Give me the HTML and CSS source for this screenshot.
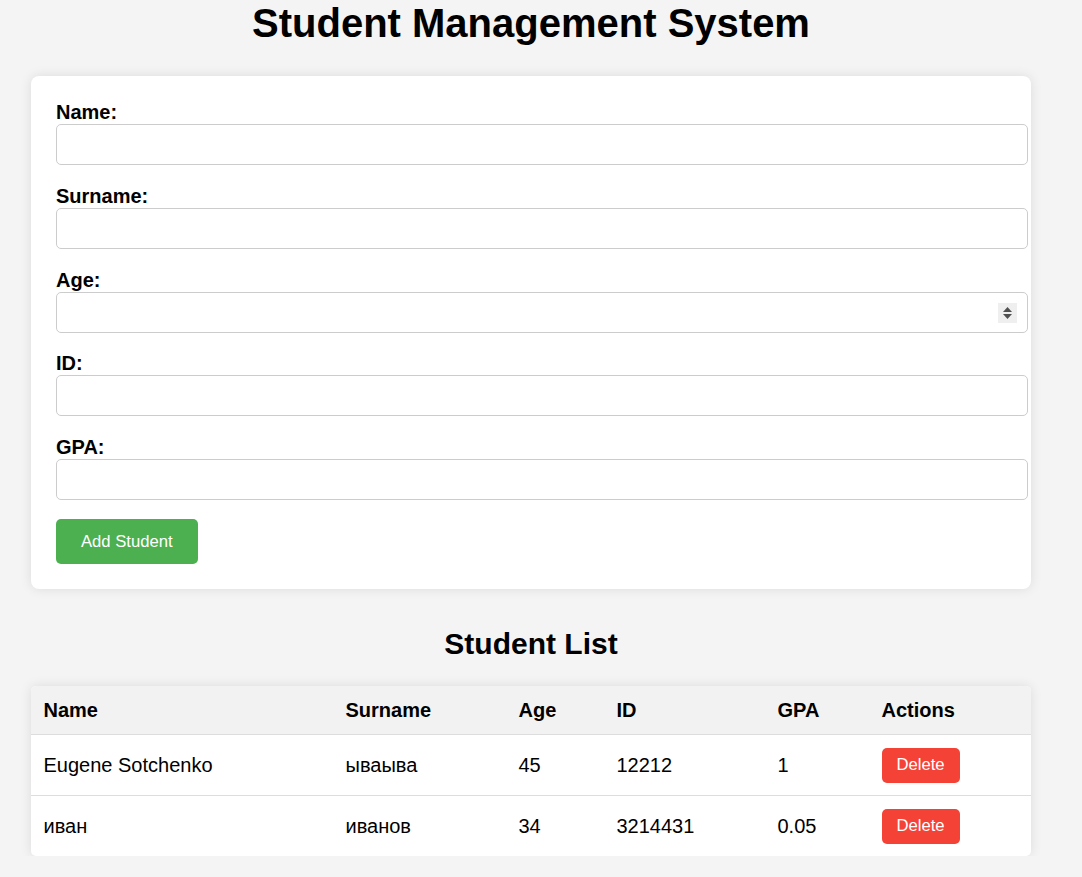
FILE: index.html
```html
<!DOCTYPE html>
<html lang="en">
<head>
<meta charset="utf-8">
<title>Student Management System</title>
<link rel="stylesheet" href="styles.css">
</head>
<body>
<div class="container">
  <h1 class="title">Student Management System</h1>
  <form class="card">
    <label class="field-label" for="name">Name:</label>
    <input class="field" id="name" type="text">
    <label class="field-label" for="surname">Surname:</label>
    <input class="field" id="surname" type="text">
    <label class="field-label" for="age">Age:</label>
    <div class="number-wrap">
      <input class="field field-number" id="age" type="number">
      <span class="spinner" aria-hidden="true">
        <svg width="11" height="14" viewBox="0 0 11 14"><path d="M5.5 1 L10 6 L1 6 Z" fill="#505050"/><path d="M1 8 L10 8 L5.5 13 Z" fill="#505050"/></svg>
      </span>
    </div>
    <label class="field-label" for="sid">ID:</label>
    <input class="field" id="sid" type="text">
    <label class="field-label" for="gpa">GPA:</label>
    <input class="field field-last" id="gpa" type="text">
    <button class="btn-add" type="button">Add Student</button>
  </form>
  <h2 class="subtitle">Student List</h2>
  <table class="students">
    <thead>
      <tr>
        <th class="c-name">Name</th>
        <th class="c-surname">Surname</th>
        <th class="c-age">Age</th>
        <th class="c-id">ID</th>
        <th class="c-gpa">GPA</th>
        <th class="c-actions">Actions</th>
      </tr>
    </thead>
    <tbody>
      <tr>
        <td>Eugene Sotchenko</td>
        <td>ываыва</td>
        <td>45</td>
        <td>12212</td>
        <td>1</td>
        <td><button class="btn-delete" type="button">Delete</button></td>
      </tr>
      <tr>
        <td>иван</td>
        <td>иванов</td>
        <td>34</td>
        <td>3214431</td>
        <td>0.05</td>
        <td><button class="btn-delete" type="button">Delete</button></td>
      </tr>
    </tbody>
  </table>
</div>
</body>
</html>
```

FILE: styles.css
```css
html, body {
  margin: 0;
  padding: 0;
}
body {
  background: #f4f4f4;
  font-family: "Liberation Sans", Arial, sans-serif;
  font-size: 20px;
  color: #000;
  padding: 0 51px 0 31px;
}
.container {
  width: 1000px;
}
.title {
  margin: 0 0 30px;
  font-size: 40px;
  line-height: 46px;
  text-align: center;
  font-weight: bold;
}
.card {
  display: block;
  background: #fff;
  padding: 25px;
  border-radius: 8px;
  box-shadow: 0 0 12px rgba(0, 0, 0, 0.1);
}
.field-label {
  display: block;
  font-weight: bold;
  font-size: 20px;
  line-height: 23px;
}
.field {
  display: block;
  box-sizing: content-box;
  width: 950px;
  height: 19px;
  padding: 10px;
  margin: 0 0 19.75px;
  border: 1px solid #ccc;
  border-radius: 5px;
  font-family: "Liberation Sans", Arial, sans-serif;
  font-size: 16.67px;
  background: #fff;
  outline: none;
}
.field-last {
  margin-bottom: 19px;
}
.field-number {
  -moz-appearance: textfield;
}
.field-number::-webkit-inner-spin-button,
.field-number::-webkit-outer-spin-button {
  -webkit-appearance: none;
  margin: 0;
}
.number-wrap {
  position: relative;
}
.spinner {
  position: absolute;
  left: 942px;
  top: 11px;
  width: 19px;
  height: 20px;
  background: #efefef;
  display: flex;
  align-items: center;
  justify-content: center;
}
.btn-add {
  display: block;
  height: 45px;
  padding: 0 25px;
  background: #4caf50;
  color: #fff;
  border: none;
  border-radius: 5px;
  font-family: "Liberation Sans", Arial, sans-serif;
  font-size: 16.67px;
  cursor: pointer;
}
.subtitle {
  margin: 37.5px 0 25px;
  font-size: 30px;
  line-height: 34.5px;
  text-align: center;
  font-weight: bold;
}
.students {
  width: 1000px;
  table-layout: fixed;
  border-collapse: separate;
  border-spacing: 0;
  background: #fff;
  border-radius: 5px;
  overflow: hidden;
  box-shadow: 0 0 12px rgba(0, 0, 0, 0.1);
}
.students th,
.students td {
  box-sizing: border-box;
  padding: 12.5px;
  text-align: left;
  border-bottom: 1px solid #ddd;
  font-size: 20px;
  line-height: 23px;
  vertical-align: middle;
}
.students th {
  background: #f2f2f2;
  font-weight: bold;
}
.students tbody tr:last-child td {
  border-bottom: none;
}
.c-name { width: 302px; }
.c-surname { width: 173px; }
.c-age { width: 98px; }
.c-id { width: 161px; }
.c-gpa { width: 104px; }
.c-actions { width: 162px; }
.btn-delete {
  display: block;
  width: 78px;
  height: 35px;
  padding: 0;
  background: #f44336;
  color: #fff;
  border: none;
  border-radius: 5px;
  font-family: "Liberation Sans", Arial, sans-serif;
  font-size: 16.67px;
  cursor: pointer;
}
```
